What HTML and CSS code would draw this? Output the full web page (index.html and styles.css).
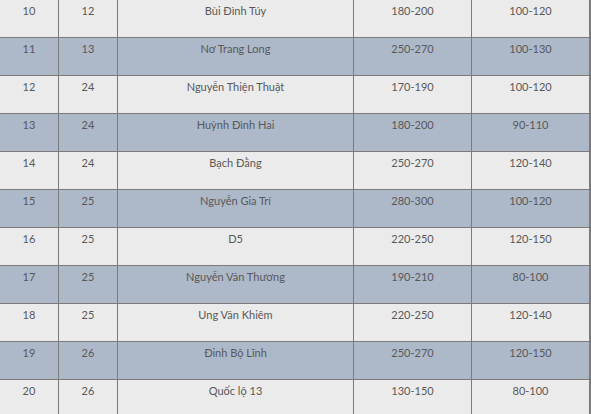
FILE: index.html
```html
<!DOCTYPE html>
<html>
<head>
<meta charset="utf-8">
<link rel="stylesheet" href="styles.css">
</head>
<body>
<table class="grid">
  <colgroup>
    <col class="c-no"><col class="c-route"><col class="c-name"><col class="c-range"><col class="c-range">
  </colgroup>
  <tbody>
    <tr class="light"><td>10</td><td>12</td><td>Bùi Đình Túy</td><td>180-200</td><td>100-120</td></tr>
    <tr class="blue"><td>11</td><td>13</td><td>Nơ Trang Long</td><td>250-270</td><td>100-130</td></tr>
    <tr class="light"><td>12</td><td>24</td><td>Nguyễn Thiện Thuật</td><td>170-190</td><td>100-120</td></tr>
    <tr class="blue"><td>13</td><td>24</td><td>Huỳnh Đình Hai</td><td>180-200</td><td>90-110</td></tr>
    <tr class="light"><td>14</td><td>24</td><td>Bạch Đằng</td><td>250-270</td><td>120-140</td></tr>
    <tr class="blue"><td>15</td><td>25</td><td>Nguyễn Gia Trí</td><td>280-300</td><td>100-120</td></tr>
    <tr class="light"><td>16</td><td>25</td><td>D5</td><td>220-250</td><td>120-150</td></tr>
    <tr class="blue"><td>17</td><td>25</td><td>Nguyễn Văn Thương</td><td>190-210</td><td>80-100</td></tr>
    <tr class="light"><td>18</td><td>25</td><td>Ung Văn Khiêm</td><td>220-250</td><td>120-140</td></tr>
    <tr class="blue"><td>19</td><td>26</td><td>Đinh Bộ Lĩnh</td><td>250-270</td><td>120-150</td></tr>
    <tr class="light"><td>20</td><td>26</td><td>Quốc lộ 13</td><td>130-150</td><td>80-100</td></tr>
  </tbody>
</table>
</body>
</html>
```
FILE: styles.css
```css
html, body {
  margin: 0;
  padding: 0;
  overflow: hidden;
  background: #ebebeb;
}
.grid {
  table-layout: fixed;
  border-collapse: separate;
  border-spacing: 1px;
  background: #7b7b7b;
  margin: -1px 0 0 -1px;
  width: 591px;
  box-shadow: 1px 0 0 #7b7b7b;
  font-family: Lato, "Liberation Sans", sans-serif;
  font-size: 11px;
  color: #595959;
}
.c-no { width: 58px; }
.c-route { width: 58px; }
.c-name { width: 235px; }
.c-range { width: 117px; }
.grid td {
  height: 37px;
  padding: 3px 0 0;
  box-sizing: border-box;
  vertical-align: top;
  text-align: center;
  line-height: 16px;
}
.light td { background: #ebebeb; }
.blue td { background: #adb8c9; }
```
